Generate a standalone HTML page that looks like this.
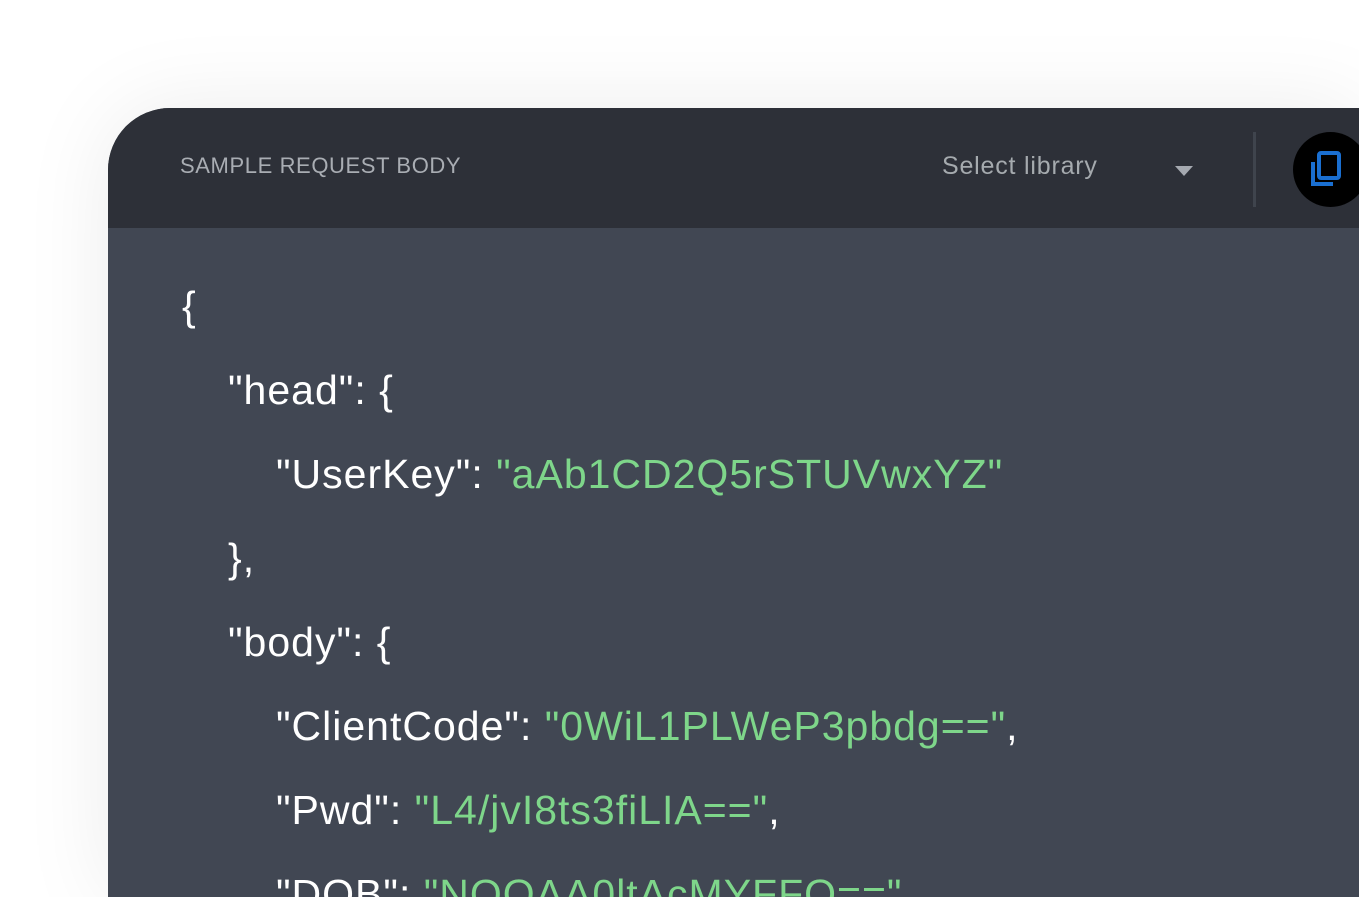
<!DOCTYPE html>
<html><head><meta charset="utf-8"><style>
html,body{margin:0;padding:0;background:#fff;width:1359px;height:897px;overflow:hidden;font-family:"Liberation Sans",sans-serif;position:relative}
.card{position:absolute;left:108px;top:108px;width:1251px;height:789px;border-radius:62px 0 0 0;overflow:hidden;background:#414753;box-shadow:0 0 90px rgba(0,0,0,0.08)}
.hdr{height:120px;background:#2d3038;position:relative}
.title{position:absolute;left:72px;top:45px;color:#a9adb3;font-size:22px;letter-spacing:0.6px}
.sel{position:absolute;left:834px;top:44px;color:#a5aaae;font-size:25px;letter-spacing:0.8px}
.tri{position:absolute;left:1067px;top:58px;width:0;height:0;border-left:9px solid transparent;border-right:9px solid transparent;border-top:10px solid #a5a9b0}
.div{position:absolute;left:1145px;top:24px;width:3px;height:75px;background:#3f444d}
.btn{position:absolute;left:1185px;top:24px;width:75px;height:75px;border-radius:50%;background:#000}
.code{position:absolute;color:#fff;font-size:41px;letter-spacing:1px;white-space:pre}
.g{color:#7ed68a}
</style></head><body>
<div class="card">
<div class="hdr">
<div class="title">SAMPLE REQUEST BODY</div>
<div class="sel">Select library</div>
<div class="tri"></div>
<div class="div"></div>
<div class="btn"><svg width="75" height="75" viewBox="0 0 75 75" style="position:absolute;left:0;top:0"><rect x="26" y="21" width="20" height="25" rx="2" fill="none" stroke="#1a6fd1" stroke-width="4"/><path d="M20 30 V52 H40" fill="none" stroke="#1a6fd1" stroke-width="4"/></svg></div>
</div>
</div>
<div class="code" style="left:182px;top:283px">{</div>
<div class="code" style="left:228px;top:367px">"head": {</div>
<div class="code" style="left:276px;top:451px">"UserKey": <span class="g">"aAb1CD2Q5rSTUVwxYZ"</span></div>
<div class="code" style="left:228px;top:535px">},</div>
<div class="code" style="left:228px;top:619px">"body": {</div>
<div class="code" style="left:276px;top:703px">"ClientCode": <span class="g">"0WiL1PLWeP3pbdg=="</span>,</div>
<div class="code" style="left:276px;top:787px">"Pwd": <span class="g">"L4/jvI8ts3fiLIA=="</span>,</div>
<div class="code" style="left:276px;top:871px">"DOB": <span class="g">"NOQAA0ltAcMYFFQ=="</span></div>
</body></html>
